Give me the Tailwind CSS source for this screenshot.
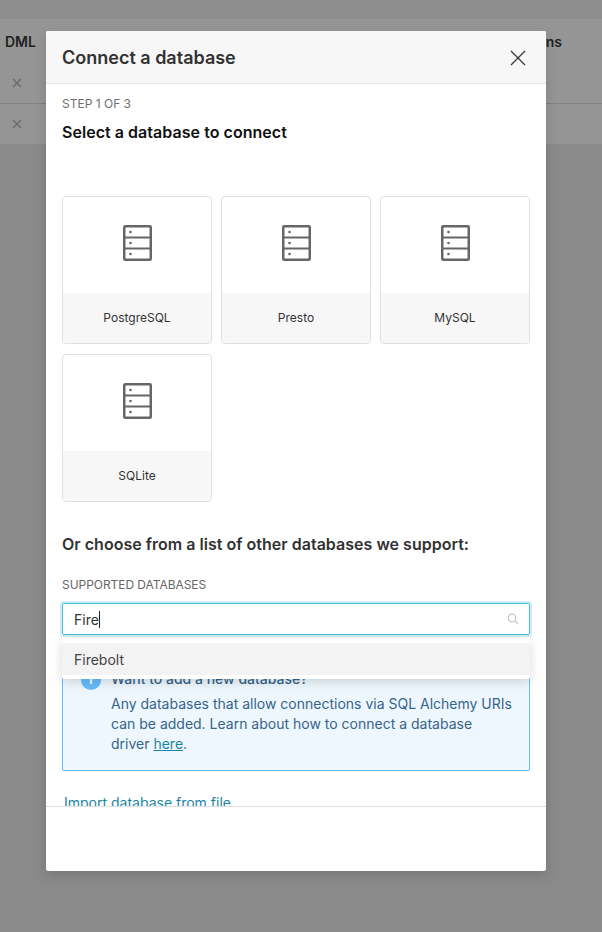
<!DOCTYPE html>
<html lang="en">
<head>
  <meta charset="UTF-8">
  <title>Connect a database</title>
  <script src="https://cdn.jsdelivr.net/npm/@tailwindcss/browser@4"></script>
</head>
<body class="relative w-[602px] h-[932px] overflow-hidden bg-[#8a8a8a] font-['Inter',sans-serif] text-[#333]">
  <!-- page behind the dimmed backdrop -->
  <div class="h-[19px] bg-[#8e8e8e]"></div>
  <div class="h-[42px] bg-[#959595] flex justify-between items-center pl-[5px] pr-[40px] pt-[2px] text-[14px] font-semibold text-[#1f1f1f]">
    <span>DML</span><span>ns</span>
  </div>
  <div class="h-[43px] bg-[#959595] border-b border-[#808080] pl-[12px] pt-[14px]">
    <svg width="10" height="10" viewBox="0 0 10 10" class="mt-[3px]"><path d="M1 1l8 8M9 1l-8 8" stroke="#6e6e6e" stroke-width="1.6"/></svg>
  </div>
  <div class="h-[40px] bg-[#959595] pl-[12px] pt-[15px]">
    <svg width="10" height="10" viewBox="0 0 10 10"><path d="M1 1l8 8M9 1l-8 8" stroke="#6e6e6e" stroke-width="1.6"/></svg>
  </div>

  <!-- modal -->
  <div class="absolute left-[46px] top-[31px] w-[500px] h-[840px] bg-white rounded-[2px] flex flex-col overflow-hidden shadow-[0_4px_12px_rgba(0,0,0,0.15)]">
    <div class="h-[53px] shrink-0 bg-[#f7f7f7] border-b border-[#e6e6e6] flex items-center justify-between pl-[16px] pr-[20px]">
      <h1 class="text-[18px] font-semibold text-[#323232]">Connect a database</h1>
      <svg width="16" height="16" viewBox="0 0 16 16" class="mt-[1px]"><path d="M1 1l14 14M15 1L1 15" stroke="#333" stroke-width="1.2"/></svg>
    </div>

    <div class="h-[722px] shrink-0 overflow-hidden px-[16px]">
      <div class="mt-[12px] text-[12px] leading-[16px] text-[#6f6f6f]">STEP 1 OF 3</div>
      <h2 class="mt-[9px] text-[16px] leading-[22px] font-semibold tracking-[0.04px] text-[#111]">Select a database to connect</h2>

      <div class="mt-[53px] grid grid-cols-3 gap-x-[9px] gap-y-[10px] w-[468px]">
        <div class="h-[148px] border border-[#e0e0e0] rounded-[4px] overflow-hidden flex flex-col">
          <div class="h-[96px] pb-[5px] flex items-center justify-center">
            <svg width="29" height="36" viewBox="0 0 29 36" fill="none"><rect x="1.25" y="1.25" width="26.5" height="33.5" rx="1" stroke="#666" stroke-width="2.5"/><path d="M2 12.4h25M2 23.5h25" stroke="#666" stroke-width="2"/><circle cx="7.5" cy="7" r="1.3" fill="#666"/><circle cx="7.5" cy="18" r="1.3" fill="#666"/><circle cx="7.5" cy="29" r="1.3" fill="#666"/></svg>
          </div>
          <div class="flex-1 bg-[#f7f7f7] flex items-center justify-center text-[12px] text-[#333]">PostgreSQL</div>
        </div>
        <div class="h-[148px] border border-[#e0e0e0] rounded-[4px] overflow-hidden flex flex-col">
          <div class="h-[96px] pb-[5px] flex items-center justify-center">
            <svg width="29" height="36" viewBox="0 0 29 36" fill="none"><rect x="1.25" y="1.25" width="26.5" height="33.5" rx="1" stroke="#666" stroke-width="2.5"/><path d="M2 12.4h25M2 23.5h25" stroke="#666" stroke-width="2"/><circle cx="7.5" cy="7" r="1.3" fill="#666"/><circle cx="7.5" cy="18" r="1.3" fill="#666"/><circle cx="7.5" cy="29" r="1.3" fill="#666"/></svg>
          </div>
          <div class="flex-1 bg-[#f7f7f7] flex items-center justify-center text-[12px] text-[#333]">Presto</div>
        </div>
        <div class="h-[148px] border border-[#e0e0e0] rounded-[4px] overflow-hidden flex flex-col">
          <div class="h-[96px] pb-[5px] flex items-center justify-center">
            <svg width="29" height="36" viewBox="0 0 29 36" fill="none"><rect x="1.25" y="1.25" width="26.5" height="33.5" rx="1" stroke="#666" stroke-width="2.5"/><path d="M2 12.4h25M2 23.5h25" stroke="#666" stroke-width="2"/><circle cx="7.5" cy="7" r="1.3" fill="#666"/><circle cx="7.5" cy="18" r="1.3" fill="#666"/><circle cx="7.5" cy="29" r="1.3" fill="#666"/></svg>
          </div>
          <div class="flex-1 bg-[#f7f7f7] flex items-center justify-center text-[12px] text-[#333]">MySQL</div>
        </div>
        <div class="h-[148px] border border-[#e0e0e0] rounded-[4px] overflow-hidden flex flex-col">
          <div class="h-[96px] pb-[5px] flex items-center justify-center">
            <svg width="29" height="36" viewBox="0 0 29 36" fill="none"><rect x="1.25" y="1.25" width="26.5" height="33.5" rx="1" stroke="#666" stroke-width="2.5"/><path d="M2 12.4h25M2 23.5h25" stroke="#666" stroke-width="2"/><circle cx="7.5" cy="7" r="1.3" fill="#666"/><circle cx="7.5" cy="18" r="1.3" fill="#666"/><circle cx="7.5" cy="29" r="1.3" fill="#666"/></svg>
          </div>
          <div class="flex-1 bg-[#f7f7f7] flex items-center justify-center text-[12px] text-[#333]">SQLite</div>
        </div>
      </div>

      <h3 class="mt-[31px] text-[16px] leading-[22px] font-semibold tracking-[0.02px] text-[#323232]">Or choose from a list of other databases we support:</h3>
      <div class="mt-[22px] text-[12px] leading-[16px] tracking-[-0.05px] text-[#666]">SUPPORTED DATABASES</div>

      <div class="relative mt-[10px]">
        <div class="h-[32px] w-[468px] border border-[#45bed6] rounded-[2px] shadow-[0_0_0_2px_rgba(32,167,201,0.2)] flex items-center justify-between pl-[11px] pr-[10px] text-[14px] text-[#333]">
          <span class="flex items-center">Fire<span class="w-px h-[17px] bg-[#222]"></span></span>
          <svg width="12" height="12" viewBox="0 0 12 12" fill="none"><circle cx="5" cy="5" r="3.8" stroke="#c4c4c4" stroke-width="1.2"/><path d="M8 8l3.2 3.2" stroke="#c4c4c4" stroke-width="1.2"/></svg>
        </div>
        <!-- dropdown sits over the alert -->
        <div class="absolute left-0 top-[36px] w-[468px] h-[40px] bg-white shadow-[0_3px_12px_rgba(0,0,0,0.15)] rounded-[2px] py-[4px] z-10">
          <div class="h-[32px] bg-[#f3f3f3] flex items-center pl-[12px] text-[14px] text-[#444]">Firebolt</div>
        </div>
      </div>

      <div class="mt-[23px] w-[468px] h-[113px] border border-[#66bcfe] rounded-[2px] bg-[#eef7fe] flex text-[#36648a] text-[14px] leading-[22px]">
        <div class="ml-[18px] mt-[11px] w-[20px] h-[20px] rounded-full bg-[#66bcfe] shrink-0 flex items-center justify-center text-white text-[12px] font-bold">i</div>
        <div class="ml-[10px] mt-[9px] w-[402px]">
          <div class="font-medium">Want to add a new database?</div>
          <p class="mt-[4px] leading-[20px]">Any databases that allow connections via SQL Alchemy URIs can be added. Learn about how to connect a database driver <a class="text-[#1985a0] underline">here</a>.</p>
        </div>
      </div>

      <a class="block mt-[21px] ml-[2px] text-[14px] leading-[22px] text-[#1985a0]">Import database from file</a>
    </div>

    <div class="flex-1 border-t border-[#e0e0e0]"></div>
  </div>
</body>
</html>
